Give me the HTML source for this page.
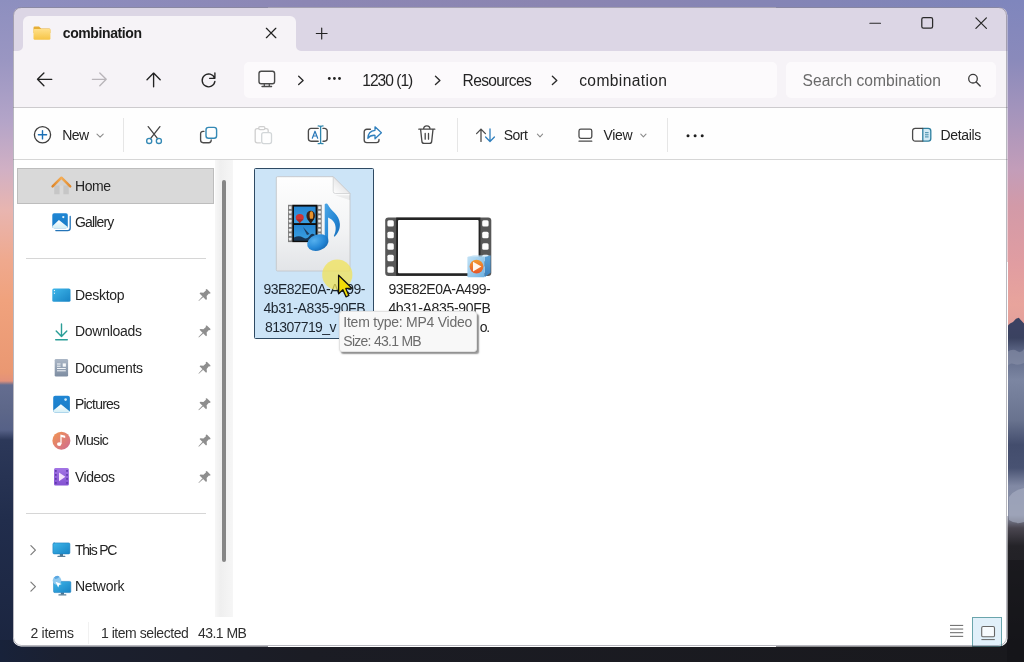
<!DOCTYPE html>
<html lang="en">
<head>
<meta charset="utf-8">
<title>combination - File Explorer</title>
<style>
html,body{margin:0;padding:0;}
body{width:1024px;height:662px;overflow:hidden;position:relative;background:#1a1f2b;font-family:"Liberation Sans", sans-serif;}
.abs,.t,svg.i{position:absolute;}
.t{white-space:nowrap;line-height:20px;height:20px;}
svg.i{overflow:visible;}
#wall{left:0;top:0;width:1024px;height:662px;
 background:linear-gradient(90deg,#8d8ec0 0%,#8c87b4 30%,#8b85b1 55%,#8385b6 80%,#7d84ba 100%);}
#wl{left:0;top:0;width:40px;height:662px;background:linear-gradient(180deg,
 #8d8fbf 0px,#9a96c2 60px,#b3a4c8 120px,#d1b0c4 170px,#e8b5b0 210px,#efa98e 260px,#f0a27d 300px,#ea9872 372px,#e3917a 381px,
 #646d90 385px,#5d6789 410px,#566187 430px,#2c3859 440px,#212d4c 520px,#1a243e 662px);}
#wr{left:990px;top:0;width:34px;height:662px;background:linear-gradient(180deg,
 #7f86bd 0px,#8a8abb 60px,#a394bc 110px,#c39db9 170px,#d29aa8 205px,#e19da1 265px,#e8a49c 305px,#e3a09b 324px,
 #3c4262 327px,#3a4260 338px,#5d6786 352px,#7c86a2 380px,#69738f 420px,#434d6d 445px,#485272 468px,#8189a4 486px,#8a90a6 515px,
 #4a4650 528px,#242328 546px,#17171b 662px);}
#wb{left:0;top:640px;width:1024px;height:22px;background:linear-gradient(90deg,#18223a 0,#1b2030 6%,#1b1c24 30%,#19191d 100%);}
#win{left:0;top:0;width:1024px;height:662px;will-change:transform;clip-path:inset(7.5px 16.5px 15.6px 13px round 8px);background:#fff;}
#winb{left:12.5px;top:7px;width:994.5px;height:639.4px;border-radius:8.5px;box-sizing:border-box;border:1px solid rgba(70,70,90,.38);}
</style>
</head>
<body>
<div class="abs" id="wall"></div>
<div class="abs" id="wl"></div>
<div class="abs" id="wr"></div>
<div class="abs" id="wb"></div>
<svg class="i" style="left:0;top:0" width="1024" height="662" viewBox="0 0 1024 662">
 <path d="M1006 328l4-4.500 3-1.500 3-3.200 2.800-1 2.200 2.400 3 3.300v6h-18Z" fill="#3b4262"/>
 <path d="M1007 352q6-4 10-1t7-2v14q-6 3-10 1t-7 3Z" fill="#8d93ab" opacity=".55"/>
 <path d="M1009 497q5-7 15-9v34q-8 3-15-2Z" fill="#aab0c4" opacity=".6"/>
 <path d="M1007 560h17v102h-17Z" fill="#121216" opacity=".5"/>
</svg>

<div class="abs" id="win">
 <!-- title bar -->
 <div class="abs" style="left:0;top:0;width:1024px;height:50.5px;background:#dcd6e5;"></div>
 <!-- nav bar -->
 <div class="abs" style="left:0;top:50.5px;width:1024px;height:56px;background:#f6f3f7;"></div>
 <!-- active tab -->
 <div class="abs" style="left:22.5px;top:15.8px;width:273.3px;height:40px;background:#f6f3f7;border-radius:6px 6px 0 0;"></div>
 <svg class="i" style="left:17.5px;top:45.5px" width="5" height="5" viewBox="0 0 5 5"><path d="M5 0V5H0A5 5 0 0 0 5 0Z" fill="#f6f3f7"/></svg>
 <svg class="i" style="left:295.8px;top:45.5px" width="5" height="5" viewBox="0 0 5 5"><path d="M0 0V5H5A5 5 0 0 1 0 0Z" fill="#f6f3f7"/></svg>
 <!-- address + search boxes -->
 <div class="abs" style="left:244px;top:61.5px;width:533px;height:36.5px;background:#fcfafc;border-radius:5px;"></div>
 <div class="abs" style="left:785.5px;top:61.5px;width:210px;height:36.5px;background:#fcfafc;border-radius:5px;"></div>
 <!-- command bar -->
 <div class="abs" style="left:0;top:106.5px;width:1024px;height:53px;background:#fefefe;border-top:1.3px solid #cdcbce;border-bottom:1px solid #d6d6d6;box-sizing:border-box;"></div>
 <div class="abs" style="left:122.5px;top:118px;width:1px;height:34px;background:#e6e6e6;"></div>
 <div class="abs" style="left:456.5px;top:118px;width:1px;height:34px;background:#e6e6e6;"></div>
 <div class="abs" style="left:667px;top:118px;width:1px;height:34px;background:#e6e6e6;"></div>
 <!-- body -->
 <div class="abs" style="left:0;top:159.5px;width:1024px;height:500px;background:#fff;"></div>
 <!-- sidebar scrollbar gutter -->
 <div class="abs" style="left:214.5px;top:159.5px;width:18.5px;height:457px;background:linear-gradient(90deg,#f7f7f7,#efefef 30%,#f3f3f3 70%,#f6f6f6);"></div>
 <div class="abs" style="left:222.2px;top:180px;width:4px;height:382px;background:#868686;border-radius:2px;"></div>
 <!-- sidebar selection -->
 <div class="abs" style="left:16.5px;top:167.5px;width:197.5px;height:36px;background:#d9d9d9;border:1px solid #bdbdbd;box-sizing:border-box;"></div>
 <div class="abs" style="left:25.5px;top:258px;width:180px;height:1px;background:#d6d6d6;"></div>
 <div class="abs" style="left:25.5px;top:512.5px;width:180px;height:1px;background:#d6d6d6;"></div>
 <!-- selected file tile -->
 <div class="abs" style="left:254px;top:167.5px;width:120px;height:171.5px;background:#cce4f7;border:1px solid #2f4a63;box-sizing:border-box;border-radius:1.5px;"></div>
 <!-- status bar -->
 <div class="abs" style="left:87.5px;top:622px;width:1px;height:22px;background:#f1f1f1;"></div>
 <div class="abs" style="left:972.3px;top:617.3px;width:29.600px;height:29.500px;background:#e1f0fa;border:1px solid #6aa5ac;box-sizing:border-box;"></div>


<svg class="i" style="left:0;top:0" width="1024" height="662" viewBox="0 0 1024 662" fill="none" stroke-linecap="round" stroke-linejoin="round">
 <defs>
  <linearGradient id="gFold" x1="0" y1="0" x2="0" y2="1"><stop offset="0" stop-color="#ffe08a"/><stop offset="1" stop-color="#f6c445"/></linearGradient>
 </defs>
 <!-- tab folder -->
 <path d="M33.500 27.700a1.300 1.300 0 0 1 1.300-1.300h4.200l2.100 2.100h8a1.300 1.300 0 0 1 1.300 1.300V33H33.500Z" fill="#e6ae36"/>
 <rect x="33.500" y="28.900" width="16.900" height="10.900" rx="1.400" fill="url(#gFold)"/>
 <!-- tab close / new tab -->
 <path d="M266.4 28.3l9.4 9.4M275.8 28.3l-9.4 9.4" stroke="#222" stroke-width="1.25"/>
 <path d="M316.300 33.500h10.800M321.700 28.100v10.800" stroke="#222" stroke-width="1.150"/>
 <!-- window controls -->
 <path d="M869.900 23.200h10.600" stroke="#2a2a2a" stroke-width="1.150"/>
 <rect x="921.800" y="17.600" width="10.800" height="10.600" rx="1.600" stroke="#2a2a2a" stroke-width="1.250"/>
 <path d="M975.900 17.900l10.500 10.500M986.400 17.900l-10.500 10.500" stroke="#2a2a2a" stroke-width="1.250"/>
 <!-- back / forward / up / refresh -->
 <path d="M51.8 79.3H38M43.9 72.9L37.5 79.3l6.4 6.4" stroke="#222" stroke-width="1.35"/>
 <path d="M92.4 79.3h13.4M99.8 72.9l6.4 6.4-6.4 6.4" stroke="#b9b5ba" stroke-width="1.35"/>
 <path d="M153.6 86.7V73.3M147 79.7l6.6-6.6 6.6 6.6" stroke="#222" stroke-width="1.35"/>
 <path d="M214.6 78.2a6.4 6.4 0 1 0 .3 3.2M214.9 72.9v5.4h-5.3" stroke="#222" stroke-width="1.35"/>
 <!-- address bar: monitor, chevrons, ellipsis -->
 <rect x="259" y="71.300" width="15.600" height="12.400" rx="2.200" stroke="#4a4a4a" stroke-width="1.400"/>
 <path d="M264.300 83.900v2.400M269.300 83.900v2.400M262 86.500h9.600" stroke="#4a4a4a" stroke-width="1.300"/>
 <path d="M298.700 76.300l4.400 4.100-4.400 4.100M435.500 76.300l4.400 4.100-4.400 4.100M552.400 76.300l4.400 4.100-4.400 4.100" stroke="#2a2a2a" stroke-width="1.350"/>
 <g fill="#222"><circle cx="329.300" cy="78.500" r="1.400"/><circle cx="334.400" cy="78.500" r="1.400"/><circle cx="339.500" cy="78.500" r="1.400"/></g>
 <!-- search icon -->
 <circle cx="973" cy="78.7" r="4.3" stroke="#3c3c3c" stroke-width="1.3"/>
 <path d="M976.2 82l4 4" stroke="#3c3c3c" stroke-width="1.4"/>
</svg>

<svg class="i" style="left:0;top:0" width="1024" height="662" viewBox="0 0 1024 662" fill="none" stroke-linecap="round" stroke-linejoin="round">
 <!-- New -->
 <circle cx="42.5" cy="134.8" r="8.1" stroke="#3d3d3d" stroke-width="1.3"/>
 <path d="M38.4 134.8h8.2M42.5 130.7v8.2" stroke="#1b6fb5" stroke-width="1.4"/>
 <path d="M97 134.2l3.1 3 3.1-3" stroke="#8b8b8b" stroke-width="1.1"/>
 <!-- Cut -->
 <path d="M148.2 126.6l9.6 12.2M159.9 126.6l-9.6 12.2" stroke="#444" stroke-width="1.3"/>
 <circle cx="149.2" cy="140.9" r="2.55" stroke="#3489b5" stroke-width="1.35"/>
 <circle cx="158.9" cy="140.9" r="2.55" stroke="#3489b5" stroke-width="1.35"/>
 <!-- Copy -->
 <path d="M204 131.3h-1a2.4 2.4 0 0 0-2.4 2.4v6.4a2.6 2.6 0 0 0 2.6 2.6h5.6a2.4 2.4 0 0 0 2.4-2.4v-.4" stroke="#4a4a4a" stroke-width="1.35"/>
 <rect x="206" y="127.4" width="10.6" height="10.8" rx="2.5" stroke="#3489b5" stroke-width="1.4"/>
 <!-- Paste (disabled) -->
 <path d="M258.6 128.6h-1.4a2 2 0 0 0-2 2v10.2a2 2 0 0 0 2 2h3.2M265 128.6h1.2a2 2 0 0 1 2 2v1.2" stroke="#cfcfcf" stroke-width="1.3"/>
 <rect x="258.7" y="126.6" width="6.2" height="3" rx="1.3" stroke="#cfcfcf" stroke-width="1.2"/>
 <rect x="261.7" y="132.6" width="9.8" height="11" rx="2" stroke="#d2d6d8" stroke-width="1.3"/>
 <!-- Rename -->
 <path d="M318.2 128.4h-7.2a2.6 2.6 0 0 0-2.6 2.6v7.6a2.6 2.6 0 0 0 2.6 2.6h7.2M323 128.4h1.6a2.6 2.6 0 0 1 2.6 2.6v7.6a2.6 2.6 0 0 1-2.6 2.6H323" stroke="#4a4a4a" stroke-width="1.35"/>
 <path d="M312.3 138.2l2.7-7 2.7 7M313.2 136h3.6" stroke="#2a78b8" stroke-width="1.2"/>
 <path d="M320.6 126.2v17.2M318.2 125.9q2.4 0 2.4 1.2 0-1.2 2.4-1.2M318.2 143.7q2.4 0 2.4-1.2 0 1.2 2.4 1.2" stroke="#2f86ad" stroke-width="1.3"/>
 <!-- Share -->
 <path d="M370.4 129.2h-3.6a2.6 2.6 0 0 0-2.6 2.6v8.2a2.6 2.6 0 0 0 2.6 2.6h9.6a2.6 2.6 0 0 0 2.6-2.6v-.6" stroke="#4a4a4a" stroke-width="1.35"/>
 <path d="M375 126.8l6.4 6-6.4 6v-3.5q-4.8-.3-7.2 3 .2-7.200 7.200-8Z" stroke="#2f7fbd" stroke-width="1.3"/>
 <!-- Delete -->
 <path d="M418.8 129.2h16M423.6 129a3.200 3.200 0 0 1 6.400 0M420.600 129.400l1.300 12a2.200 2.200 0 0 0 2.200 2h5.400a2.200 2.200 0 0 0 2.200-2l1.300-12M425.200 133.400v5.800M428.500 133.400v5.800" stroke="#474747" stroke-width="1.3"/>
 <!-- Sort -->
 <path d="M481 141.400v-12.200M476.600 133.600l4.400-4.500 4.400 4.500" stroke="#4a4a4a" stroke-width="1.3"/>
 <path d="M490 129v12.300M485.600 137l4.400 4.500 4.400-4.500" stroke="#2f7fbd" stroke-width="1.3"/>
 <path d="M537.400 134.200l2.600 2.600 2.600-2.600" stroke="#8b8b8b" stroke-width="1.1"/>
 <!-- View -->
 <rect x="579" y="129.200" width="12.800" height="9.200" rx="1.800" stroke="#4a4a4a" stroke-width="1.3"/>
 <path d="M579 141.200h12.800" stroke="#4a4a4a" stroke-width="1.2"/>
 <path d="M640.800 134.200l2.600 2.600 2.600-2.600" stroke="#8b8b8b" stroke-width="1.1"/>
 <!-- more -->
 <g fill="#1f1f1f"><circle cx="688" cy="135.700" r="1.500"/><circle cx="695.100" cy="135.700" r="1.500"/><circle cx="702.200" cy="135.700" r="1.500"/></g>
 <!-- Details -->
 <path d="M922.800 128.300h5.400a2.600 2.600 0 0 1 2.600 2.600v7.600a2.600 2.600 0 0 1-2.600 2.600h-5.400Z" fill="#d3eaf4" stroke="#2d7f9f" stroke-width="1.3"/>
 <path d="M922.800 128.300h-7.600a2.600 2.600 0 0 0-2.600 2.600v7.600a2.600 2.600 0 0 0 2.600 2.600h7.600" stroke="#4a4a4a" stroke-width="1.3"/>
 <path d="M925.400 132.700h2.800M925.400 134.800h2.800M925.400 136.900h2.800" stroke="#2d7f9f" stroke-width=".9"/>
</svg>

<svg class="i" style="left:0;top:0" width="1024" height="662" viewBox="0 0 1024 662" fill="none" stroke-linecap="round" stroke-linejoin="round">
 <defs>
  <linearGradient id="gRoof" x1="0" y1="0" x2="1" y2="0"><stop offset="0" stop-color="#dd8528"/><stop offset=".5" stop-color="#f5ad55"/><stop offset="1" stop-color="#de8a30"/></linearGradient>
  <linearGradient id="gBlue" x1="0" y1="0" x2="1" y2="1"><stop offset="0" stop-color="#3fb7ea"/><stop offset="1" stop-color="#1783c4"/></linearGradient>
  <linearGradient id="gPic" x1="0" y1="0" x2="0" y2="1"><stop offset="0" stop-color="#1f86d4"/><stop offset="1" stop-color="#1a7cc6"/></linearGradient>
  <linearGradient id="gMnt" x1="0" y1="0" x2="0" y2="1"><stop offset="0" stop-color="#ffffff"/><stop offset="1" stop-color="#d2eef5"/></linearGradient>
  <linearGradient id="gDoc" x1="0" y1="0" x2="0" y2="1"><stop offset="0" stop-color="#abb7c6"/><stop offset="1" stop-color="#7d8ca1"/></linearGradient>
  <linearGradient id="gMus" x1="0" y1="0" x2="1" y2="1"><stop offset="0" stop-color="#f29650"/><stop offset="1" stop-color="#cf6a92"/></linearGradient>
  <linearGradient id="gVid" x1="0" y1="0" x2="0" y2="1"><stop offset="0" stop-color="#a274e4"/><stop offset="1" stop-color="#8452d2"/></linearGradient>
 </defs>
 <!-- Home -->
 <path d="M54.200 184.500h5.400v9.800h-5.400ZM63.400 184.500h5.400v9.800h-5.400Z" fill="#c6c6c6"/>
 <path d="M54.200 182.500l7.200-5 7.200 5v3h-14.400Z" fill="#d2d2d2"/>
 <path d="M52.600 186.300l8.800-8.600 8.800 8.600" stroke="url(#gRoof)" stroke-width="2.500"/>
 <!-- Gallery -->
 <path d="M70.200 216.500v11.500a2.600 2.600 0 0 1-2.600 2.600h-11.800" stroke="#2474b8" stroke-width="1.300"/>
 <rect x="52.300" y="213.300" width="15.500" height="15" rx="1.800" fill="url(#gPic)"/>
 <path d="M52.300 226.300l6.600-6.400 8.900 7.200v-.6a1.800 1.800 0 0 1-1.800 1.800h-11.900a1.800 1.800 0 0 1-1.800-1.800Z" fill="url(#gMnt)"/>
 <circle cx="63.300" cy="217.100" r="1.150" fill="#e4f3fb"/>
 <!-- Desktop -->
 <rect x="52.300" y="288.500" width="18.200" height="13.300" rx="1.600" fill="url(#gBlue)"/>
 <rect x="53.900" y="290" width="1.100" height="1.100" fill="#e8f6fc"/><rect x="53.900" y="292.700" width="1.100" height="1.100" fill="#e8f6fc"/>
 <!-- Downloads -->
 <path d="M61.500 324v12.500M56.200 331l5.300 5.600 5.300-5.600M55.700 339.800h11.600" stroke="#2a9e97" stroke-width="1.400"/>
 <!-- Documents -->
 <rect x="54.700" y="359" width="13.400" height="17.500" rx="1.300" fill="url(#gDoc)"/>
 <path d="M57 364h3.600M57 366.200h3.600M57 368.500h8.800M57 370.800h8.800" stroke="#f2f5f8" stroke-width="1" stroke-linecap="butt"/>
 <rect x="62.700" y="363.400" width="3.200" height="3.300" fill="#f6f8fa"/>
 <!-- Pictures -->
 <rect x="53.200" y="395.700" width="16.700" height="16.900" rx="2" fill="url(#gPic)"/>
 <path d="M53.200 410.600l7.700-6.400 9 7.400v-.800a1.800 1.800 0 0 1-1.800 1.800h-13.100a1.800 1.800 0 0 1-1.800-1.800Z" fill="url(#gMnt)"/>
 <circle cx="65.600" cy="399.600" r="1.300" fill="#cfeaf8"/>
 <!-- Music -->
 <circle cx="61.400" cy="440.700" r="9" fill="url(#gMus)"/>
 <ellipse cx="59.200" cy="444.100" rx="2.200" ry="1.900" fill="#fff"/>
 <path d="M60.400 444.100h1.200v-7.200l3.600 1v-2.200l-4.800-1.300Z" fill="#fff"/>
 <!-- Videos -->
 <rect x="54" y="468.100" width="14.900" height="17.400" rx="1.500" fill="url(#gVid)"/>
 <g fill="#5a35a6"><rect x="55.100" y="470" width="1.500" height="1.800"/><rect x="55.100" y="474" width="1.500" height="1.800"/><rect x="55.100" y="478" width="1.500" height="1.800"/><rect x="55.100" y="482" width="1.500" height="1.800"/>
 <rect x="66.300" y="470" width="1.500" height="1.800"/><rect x="66.300" y="474" width="1.500" height="1.800"/><rect x="66.300" y="478" width="1.500" height="1.800"/><rect x="66.300" y="482" width="1.500" height="1.800"/></g>
 <path d="M59 472.400v8.800l6.400-4.400Z" fill="#f3e2fb"/>
 <!-- This PC -->
 <rect x="59.800" y="553.600" width="3.200" height="2.600" fill="#4f7590"/>
 <rect x="57.400" y="555.800" width="8" height="1.200" rx=".5" fill="#5a7f98"/>
 <rect x="52.900" y="542.900" width="17" height="11" rx="1.200" fill="url(#gBlue)" stroke="#1c7fc0" stroke-width=".6"/>
 <!-- Network -->
 <rect x="60.800" y="592.300" width="3.200" height="2.400" fill="#4f7590"/>
 <rect x="58.400" y="594.300" width="8" height="1.200" rx=".5" fill="#5a7f98"/>
 <rect x="53.600" y="581.400" width="17.200" height="11.200" rx="1.200" fill="url(#gBlue)" stroke="#1c7fc0" stroke-width=".6"/>
 <circle cx="57" cy="580.500" r="4.300" fill="#8fcaf0"/>
 <path d="M54 577.700a4.300 4.300 0 0 1 5.500-1.200l-1.500 1.800-2.600.6Z" fill="#5aa6e0"/>
 <path d="M55.500 581.700l6.300 2.400-2.600.9-1 2.600Z" fill="#ffffff"/>
 <g transform="translate(204.3 295.2) rotate(45)" fill="#8e8e8e" stroke="none"><path d="M-2.600 -6.200h5.200l.500 1.100-1 .700.200 3.400 2.300 1.900v1.200h-9.200v-1.200l2.300-1.900.200-3.400-1-.700Z"/><path d="M-.550 2h1.100L.300 8h-.600Z"/></g>
 <g transform="translate(204.3 331.6) rotate(45)" fill="#8e8e8e" stroke="none"><path d="M-2.600 -6.200h5.200l.500 1.100-1 .700.200 3.400 2.300 1.900v1.200h-9.200v-1.200l2.300-1.900.200-3.400-1-.700Z"/><path d="M-.550 2h1.100L.300 8h-.600Z"/></g>
 <g transform="translate(204.3 368) rotate(45)" fill="#8e8e8e" stroke="none"><path d="M-2.600 -6.200h5.200l.500 1.100-1 .700.200 3.400 2.300 1.900v1.200h-9.200v-1.200l2.300-1.900.200-3.400-1-.700Z"/><path d="M-.550 2h1.100L.300 8h-.600Z"/></g>
 <g transform="translate(204.3 404.4) rotate(45)" fill="#8e8e8e" stroke="none"><path d="M-2.600 -6.200h5.200l.500 1.100-1 .700.200 3.400 2.300 1.900v1.200h-9.200v-1.200l2.300-1.900.200-3.400-1-.700Z"/><path d="M-.550 2h1.100L.300 8h-.600Z"/></g>
 <g transform="translate(204.3 440.8) rotate(45)" fill="#8e8e8e" stroke="none"><path d="M-2.600 -6.200h5.200l.500 1.100-1 .700.200 3.400 2.300 1.900v1.200h-9.200v-1.200l2.300-1.900.200-3.400-1-.700Z"/><path d="M-.550 2h1.100L.300 8h-.600Z"/></g>
 <g transform="translate(204.3 477.2) rotate(45)" fill="#8e8e8e" stroke="none"><path d="M-2.600 -6.200h5.200l.500 1.100-1 .700.200 3.400 2.300 1.900v1.200h-9.200v-1.200l2.300-1.900.200-3.400-1-.700Z"/><path d="M-.550 2h1.100L.300 8h-.600Z"/></g>
 <path d="M30.900 545.7l4.500 4.500-4.500 4.500" stroke="#7c7c7c" stroke-width="1.200" fill="none"/><path d="M30.900 582.1l4.500 4.500-4.500 4.500" stroke="#7c7c7c" stroke-width="1.200" fill="none"/>
</svg>

<svg class="i" style="left:0;top:0" width="1024" height="662" viewBox="0 0 1024 662" fill="none">
 <defs>
  <linearGradient id="gPage" x1="0" y1="0" x2="0" y2="1"><stop offset="0" stop-color="#fefefe"/><stop offset=".55" stop-color="#f3f4f5"/><stop offset="1" stop-color="#e2e4e7"/></linearGradient>
  <linearGradient id="gFoldc" x1="0" y1="1" x2="1" y2="0"><stop offset="0" stop-color="#ffffff"/><stop offset=".5" stop-color="#e9e9ea"/><stop offset="1" stop-color="#cfd0d2"/></linearGradient>
  <linearGradient id="gNote" x1="0" y1="0" x2="1" y2="1"><stop offset="0" stop-color="#4ba6e6"/><stop offset=".6" stop-color="#2385d3"/><stop offset="1" stop-color="#1767b0"/></linearGradient>
  <radialGradient id="gHead" cx=".38" cy=".3" r=".8"><stop offset="0" stop-color="#55b0ee"/><stop offset=".6" stop-color="#2487d6"/><stop offset="1" stop-color="#1564ac"/></radialGradient>
  <linearGradient id="gSky" x1="0" y1="0" x2="0" y2="1"><stop offset="0" stop-color="#2686d2"/><stop offset="1" stop-color="#3aa0e2"/></linearGradient>
  <linearGradient id="gCubeF" x1="0" y1="0" x2="1" y2="1"><stop offset="0" stop-color="#c2e2f6"/><stop offset="1" stop-color="#6fb2e2"/></linearGradient>
  <linearGradient id="gCubeS" x1="0" y1="0" x2="0" y2="1"><stop offset="0" stop-color="#5aa2d8"/><stop offset="1" stop-color="#3a7fbc"/></linearGradient>
  <linearGradient id="gOr" x1="0" y1="0" x2="0" y2="1"><stop offset="0" stop-color="#f29a2e"/><stop offset="1" stop-color="#e5562a"/></linearGradient>
 </defs>
 <!-- file 1: page -->
 <path d="M277.500 176.700h55.700l16.800 16.800v76.300a1.200 1.200 0 0 1-1.200 1.200h-71.300a1.200 1.200 0 0 1-1.200-1.200v-91.900a1.200 1.200 0 0 1 1.200-1.200Z" fill="url(#gPage)" stroke="#c4c6c9" stroke-width=".9"/>
 <path d="M333.200 176.700v14.600a2.200 2.200 0 0 0 2.200 2.200h14.600Z" fill="url(#gFoldc)" stroke="#c9cacc" stroke-width=".7"/>
 <path d="M335 195.300h15v5l-15-5Z" fill="#000" opacity=".06"/>
 <!-- film strip thumbnail -->
 <rect x="288" y="204.800" width="33.700" height="37.300" fill="#7d7d7d"/>
 <rect x="292.400" y="204.800" width="24.900" height="37.300" fill="#0d0d0d"/>
 <rect x="288.9" y="206.3" width="2.6" height="2.6" rx=".4" fill="#ececec"/><rect x="288.9" y="210.8" width="2.6" height="2.6" rx=".4" fill="#ececec"/><rect x="288.9" y="215.3" width="2.6" height="2.6" rx=".4" fill="#ececec"/><rect x="288.9" y="219.8" width="2.6" height="2.6" rx=".4" fill="#ececec"/><rect x="288.9" y="224.3" width="2.6" height="2.6" rx=".4" fill="#ececec"/><rect x="288.9" y="228.8" width="2.6" height="2.6" rx=".4" fill="#ececec"/><rect x="288.9" y="233.3" width="2.6" height="2.6" rx=".4" fill="#ececec"/><rect x="288.9" y="237.8" width="2.6" height="2.6" rx=".4" fill="#ececec"/><rect x="318.2" y="206.3" width="2.6" height="2.6" rx=".4" fill="#ececec"/><rect x="318.2" y="210.8" width="2.6" height="2.6" rx=".4" fill="#ececec"/><rect x="318.2" y="215.3" width="2.6" height="2.6" rx=".4" fill="#ececec"/><rect x="318.2" y="219.8" width="2.6" height="2.6" rx=".4" fill="#ececec"/><rect x="318.2" y="224.3" width="2.6" height="2.6" rx=".4" fill="#ececec"/><rect x="318.2" y="228.8" width="2.6" height="2.6" rx=".4" fill="#ececec"/><rect x="318.2" y="233.3" width="2.6" height="2.6" rx=".4" fill="#ececec"/><rect x="318.2" y="237.8" width="2.6" height="2.6" rx=".4" fill="#ececec"/>
 <rect x="294" y="206.600" width="21.600" height="16.500" fill="url(#gSky)"/>
 <rect x="294" y="225" width="21.600" height="15.200" fill="url(#gSky)"/>
 <ellipse cx="299.800" cy="217.500" rx="4" ry="3.600" fill="#cf3434"/>
 <path d="M296.300 219.300l3.500 4 3.500-4Z" fill="#a82a2a"/>
 <ellipse cx="310.700" cy="215.800" rx="4.300" ry="5" fill="#3a2418"/>
 <ellipse cx="311.400" cy="215.400" rx="1.800" ry="4.200" fill="#e8932c"/>
 <path d="M307.200 218.700l3.500 5.200 3.500-5.200Z" fill="#2a1a12"/>
 <path d="M294 237.500q5-2.500 9 0t6.500-1.500 6.100-.500v4.700h-21.600Z" fill="#183656"/>
 <path d="M303 227l6.500 7-2.500 1Z" fill="#1d3f66"/>
 <!-- music note -->
 <path d="M324.700 204.300c.9-1.100 2.600-1 3.300.400C330.500 210.500 339.600 214.500 339.900 224c.200 5.500-2.400 9.800-5 12.400-.600.500-1.300-.100-.900-.800 1.900-3.700 2.400-8.900.300-12.800-1.500-2.700-3.700-4.400-6.200-5.400V241h-3.400Z" fill="url(#gNote)"/>
 <ellipse cx="317.800" cy="242.600" rx="11" ry="8" transform="rotate(-20 317.800 242.600)" fill="url(#gHead)"/>

 <!-- file 2: film frame -->
 <rect x="385.200" y="217.400" width="106.100" height="58.500" rx="3.200" fill="#575757"/>
 <rect x="396.200" y="217.600" width="84.200" height="58.100" fill="#242424"/>
 <rect x="398" y="220" width="80.600" height="53.200" rx="1" fill="#ffffff"/>
 <rect x="387.4" y="220.2" width="6.400" height="6.400" rx="1.500" fill="#fdfdfd"/><rect x="387.4" y="231.8" width="6.400" height="6.400" rx="1.500" fill="#fdfdfd"/><rect x="387.4" y="243.3" width="6.400" height="6.400" rx="1.500" fill="#fdfdfd"/><rect x="387.4" y="254.8" width="6.400" height="6.400" rx="1.500" fill="#fdfdfd"/><rect x="387.4" y="266.4" width="6.400" height="6.400" rx="1.500" fill="#fdfdfd"/><rect x="482.2" y="220.2" width="6.400" height="6.400" rx="1.500" fill="#fdfdfd"/><rect x="482.2" y="231.8" width="6.400" height="6.400" rx="1.500" fill="#fdfdfd"/><rect x="482.2" y="243.3" width="6.400" height="6.400" rx="1.500" fill="#fdfdfd"/><rect x="482.2" y="254.8" width="6.400" height="6.400" rx="1.500" fill="#fdfdfd"/><rect x="482.2" y="266.4" width="6.400" height="6.400" rx="1.500" fill="#fdfdfd"/>
 <!-- WMP badge -->
 <path d="M484.600 256.800l6-1.200v17.200l-6 4.500Z" fill="url(#gCubeS)"/>
 <path d="M467.400 256.800l6-1.200h17.200l-6 1.200Z" fill="#b9dcf3"/>
 <rect x="467.400" y="256.800" width="17.200" height="20.500" rx=".8" fill="url(#gCubeF)"/>
 <circle cx="476.500" cy="266.600" r="6.900" fill="url(#gOr)"/>
 <path d="M473 261.700v9.800l8.400-4.900Z" fill="#fff7ee"/>
</svg>

<svg class="i" style="left:0;top:0" width="1024" height="662" viewBox="0 0 1024 662" fill="none">
 <path d="M950 625.400h13.200M950 629.050h13.200M950 632.700h13.200M950 636.350h13.200" stroke="#666" stroke-width="1"/>
 <rect x="981.700" y="626.500" width="12.800" height="10.300" rx="1.400" fill="#f7fbfe" stroke="#666" stroke-width="1.100"/>
 <path d="M981.400 639.600h13.400" stroke="#666" stroke-width="1"/>
</svg>


<span class="t" id="t_tab" style="left:62.8px;top:23px;font-size:14px;color:#1b1b1b;font-weight:700;letter-spacing:-0.403px;">combination</span>
<span class="t" id="t_a1" style="left:362.3px;top:71px;font-size:15.6px;color:#242424;font-weight:400;letter-spacing:-1.013px;">1230 (1)</span>
<span class="t" id="t_a2" style="left:462.6px;top:71px;font-size:15.6px;color:#242424;font-weight:400;letter-spacing:-0.668px;">Resources</span>
<span class="t" id="t_a3" style="left:579.2px;top:71px;font-size:15.6px;color:#242424;font-weight:400;letter-spacing:0.371px;">combination</span>
<span class="t" id="t_srch" style="left:802.5px;top:71px;font-size:15.6px;color:#6a6a6a;font-weight:400;letter-spacing:0.040px;">Search combination</span>
<span class="t" id="t_new" style="left:62.3px;top:125px;font-size:14px;color:#242424;font-weight:400;letter-spacing:-0.658px;">New</span>
<span class="t" id="t_sort" style="left:503.8px;top:125px;font-size:14px;color:#242424;font-weight:400;letter-spacing:-0.563px;">Sort</span>
<span class="t" id="t_view" style="left:603.6px;top:125px;font-size:14px;color:#242424;font-weight:400;letter-spacing:-0.398px;">View</span>
<span class="t" id="t_det" style="left:940.6px;top:125px;font-size:14px;color:#242424;font-weight:400;letter-spacing:-0.366px;">Details</span>
<span class="t" id="s_home" style="left:75.1px;top:176px;font-size:14px;color:#242424;font-weight:400;letter-spacing:-0.486px;">Home</span>
<span class="t" id="s_gal" style="left:75px;top:212px;font-size:14px;color:#242424;font-weight:400;letter-spacing:-0.843px;">Gallery</span>
<span class="t" id="s_desk" style="left:75px;top:285px;font-size:14px;color:#242424;font-weight:400;letter-spacing:-0.293px;">Desktop</span>
<span class="t" id="s_down" style="left:75px;top:321px;font-size:14px;color:#242424;font-weight:400;letter-spacing:-0.271px;">Downloads</span>
<span class="t" id="s_docs" style="left:75px;top:358px;font-size:14px;color:#242424;font-weight:400;letter-spacing:-0.352px;">Documents</span>
<span class="t" id="s_pics" style="left:75px;top:394px;font-size:14px;color:#242424;font-weight:400;letter-spacing:-0.797px;">Pictures</span>
<span class="t" id="s_mus" style="left:75px;top:430px;font-size:14px;color:#242424;font-weight:400;letter-spacing:-0.691px;">Music</span>
<span class="t" id="s_vid" style="left:75px;top:467px;font-size:14px;color:#242424;font-weight:400;letter-spacing:-0.532px;">Videos</span>
<span class="t" id="s_pc" style="left:75px;top:540px;font-size:14px;color:#242424;font-weight:400;letter-spacing:-1.233px;">This PC</span>
<span class="t" id="s_net" style="left:75px;top:576px;font-size:14px;color:#242424;font-weight:400;letter-spacing:-0.310px;">Network</span>
<span class="t" id="f1a" style="left:263.4px;top:279px;font-size:14px;color:#1d2630;font-weight:400;letter-spacing:-0.536px;">93E82E0A-A499-</span>
<span class="t" id="f1b" style="left:263.4px;top:298px;font-size:14px;color:#1d2630;font-weight:400;letter-spacing:-0.334px;">4b31-A835-90FB</span>
<span class="t" id="f1c" style="left:265px;top:317px;font-size:14px;color:#1d2630;font-weight:400;letter-spacing:-0.631px;">81307719_v</span>
<span class="t" id="f2a" style="left:388.4px;top:279px;font-size:14px;color:#242424;font-weight:400;letter-spacing:-0.513px;">93E82E0A-A499-</span>
<span class="t" id="f2b" style="left:388.4px;top:298px;font-size:14px;color:#242424;font-weight:400;letter-spacing:-0.326px;">4b31-A835-90FB</span>
<span class="t" id="f2c" style="left:479.7px;top:317px;font-size:14px;color:#242424;font-weight:400;letter-spacing:-1.287px;">o.</span>
<span class="t" id="st1" style="left:30.5px;top:623px;font-size:14px;color:#303030;font-weight:400;letter-spacing:-0.287px;">2 items</span>
<span class="t" id="st2" style="left:100.9px;top:623px;font-size:14px;color:#303030;font-weight:400;letter-spacing:-0.448px;">1 item selected</span>
<span class="t" id="st3" style="left:198px;top:623px;font-size:14px;color:#303030;font-weight:400;letter-spacing:-0.540px;">43.1 MB</span>

 <!-- highlight + cursor -->

<svg class="i" style="left:0;top:0" width="1024" height="662" viewBox="0 0 1024 662" fill="none">
 <circle cx="337.300" cy="274.700" r="15.100" fill="#f1e356" opacity=".74"/>
 <path d="M338.600 275.200v18.600l4.300-4.100 3.100 7.100 2.900-1.300-3.100-7 6.100-.300Z" fill="#f2dc08" stroke="#111" stroke-width="1.300" stroke-linejoin="round"/>
</svg>


 <!-- tooltip -->
 <div class="abs" style="left:338.6px;top:310.6px;width:138.9px;height:41px;background:#f8f8f8;border:1px solid #e2e2e2;box-sizing:border-box;border-radius:3px;box-shadow:2px 2.5px 1.5px -0.5px rgba(0,0,0,.42),0 0 2px rgba(0,0,0,.12);"></div>
<span class="t" id="tp1" style="left:343.3px;top:312px;font-size:14px;color:#6c6c6c;font-weight:400;letter-spacing:-0.237px;">Item type: MP4 Video</span>
<span class="t" id="tp2" style="left:343.3px;top:331px;font-size:14px;color:#6c6c6c;font-weight:400;letter-spacing:-0.730px;">Size: 43.1 MB</span>
</div>
<div class="abs" id="winb"></div>
</body>
</html>
